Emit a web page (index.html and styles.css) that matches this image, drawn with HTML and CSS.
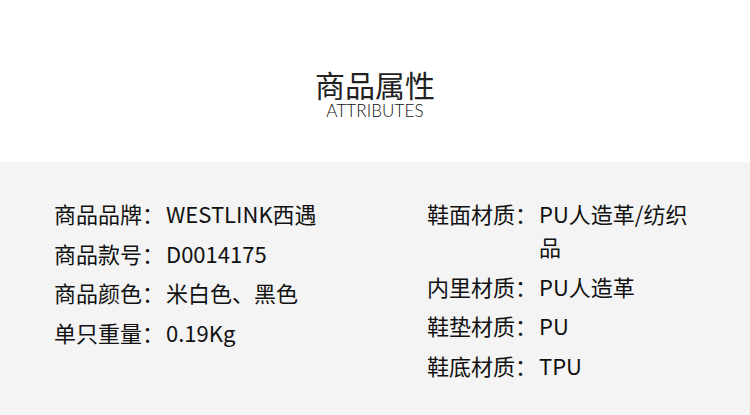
FILE: index.html
```html
<!DOCTYPE html>
<html lang="zh">
<head>
<meta charset="utf-8">
<link rel="stylesheet" href="styles.css">
</head>
<body>
<header class="head">
  <h1 class="title">商品属性</h1>
  <div class="subtitle">ATTRIBUTES</div>
</header>
<section class="attrs">
  <ul class="col col-left">
    <li class="row"><span class="label">商品品牌：</span><span class="value">WESTLINK西遇</span></li>
    <li class="row"><span class="label">商品款号：</span><span class="value">D0014175</span></li>
    <li class="row"><span class="label">商品颜色：</span><span class="value">米白色、黑色</span></li>
    <li class="row"><span class="label">单只重量：</span><span class="value">0.19Kg</span></li>
  </ul>
  <ul class="col col-right">
    <li class="row"><span class="label">鞋面材质：</span><span class="value">PU人造革/纺织品</span></li>
    <li class="row"><span class="label">内里材质：</span><span class="value">PU人造革</span></li>
    <li class="row"><span class="label">鞋垫材质：</span><span class="value">PU</span></li>
    <li class="row"><span class="label">鞋底材质：</span><span class="value">TPU</span></li>
  </ul>
</section>
</body>
</html>
```
FILE: styles.css
```css
html, body {
  margin: 0;
  padding: 0;
  background: #fff;
}
body {
  width: 750px;
  height: 415px;
  overflow: hidden;
  font-family: "Noto Sans CJK SC", "Noto Sans", sans-serif;
  color: #111;
}
.head {
  height: 162px;
  box-sizing: border-box;
  padding-top: 69px;
  display: flex;
  flex-direction: column;
  align-items: center;
}
.title {
  margin: 0;
  font-size: 30px;
  line-height: 30px;
  font-weight: 400;
  color: #222;
}
.subtitle {
  margin-top: 3px;
  font-family: "Lato", "Noto Sans", sans-serif;
  font-weight: 300;
  font-size: 17px;
  line-height: 17px;
  color: #111;
  letter-spacing: 0.1px;
}
.attrs {
  background: #f4f4f4;
  height: 253px;
  box-sizing: border-box;
  padding: 35px 0 0 54px;
  display: flex;
}
.col {
  list-style: none;
  margin: 0;
  padding: 0;
  display: flex;
  flex-direction: column;
  gap: 6.6px;
}
.col-left {
  width: 373px;
}
.col-right {
  width: 272px;
}
.row {
  display: flex;
  font-size: 22px;
  line-height: 33px;
}
.label {
  flex: none;
  width: 112px;
}
.value {
  flex: 1;
  min-width: 0;
}
```
